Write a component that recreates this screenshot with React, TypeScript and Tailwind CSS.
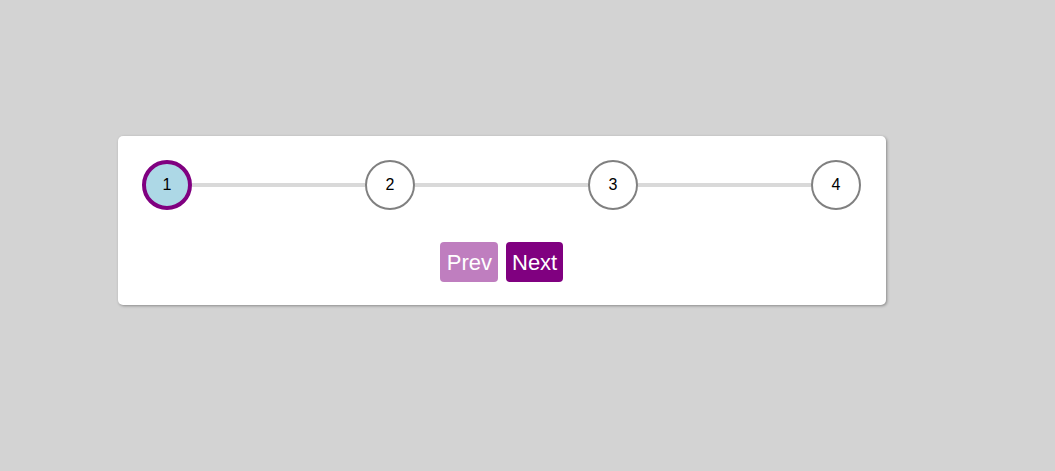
import React, { useState } from 'react';

const STEPS = [1, 2, 3, 4];

export default function App() {
    const [current, setCurrent] = useState(1);

    return (
        <div className="min-h-screen w-full bg-[#d3d3d3] pt-[136px] pl-[118px]" style={{ fontFamily: '"Liberation Sans", Arial, sans-serif' }}>
            <div className="w-[768px] rounded-[5px] bg-white py-6 pl-6 pr-[25px] pb-[23px] shadow-[1px_1px_3px_rgba(0,0,0,0.35)]">
                {/* Progress row */}
                <div className="flex items-center">
                    {STEPS.map((step, i) => (
                        <React.Fragment key={step}>
                            {i > 0 && (
                                <div className={`h-1 flex-1 ${step <= current ? 'bg-[#800080]' : 'bg-[#d9d9d9]'}`} />
                            )}
                            <div
                                className={`flex h-[50px] w-[50px] shrink-0 items-center justify-center rounded-full text-[16px] text-black ${
                                    step <= current
                                        ? 'border-4 border-[#800080] bg-[#add8e6]'
                                        : 'border-2 border-[#808080] bg-white'
                                }`}
                            >
                                {step}
                            </div>
                        </React.Fragment>
                    ))}
                </div>

                {/* Buttons */}
                <div className="mt-8 flex justify-center gap-2">
                    <button
                        onClick={() => setCurrent(c => Math.max(1, c - 1))}
                        disabled={current === 1}
                        className="h-10 rounded-[4px] bg-[#800080] pl-[7px] pr-[6px] text-[22px] text-white disabled:opacity-50"
                    >
                        Prev
                    </button>
                    <button
                        onClick={() => setCurrent(c => Math.min(STEPS.length, c + 1))}
                        disabled={current === STEPS.length}
                        className="h-10 rounded-[4px] bg-[#800080] px-[6px] text-[22px] text-white disabled:opacity-50"
                    >
                        Next
                    </button>
                </div>
            </div>
        </div>
    );
}
